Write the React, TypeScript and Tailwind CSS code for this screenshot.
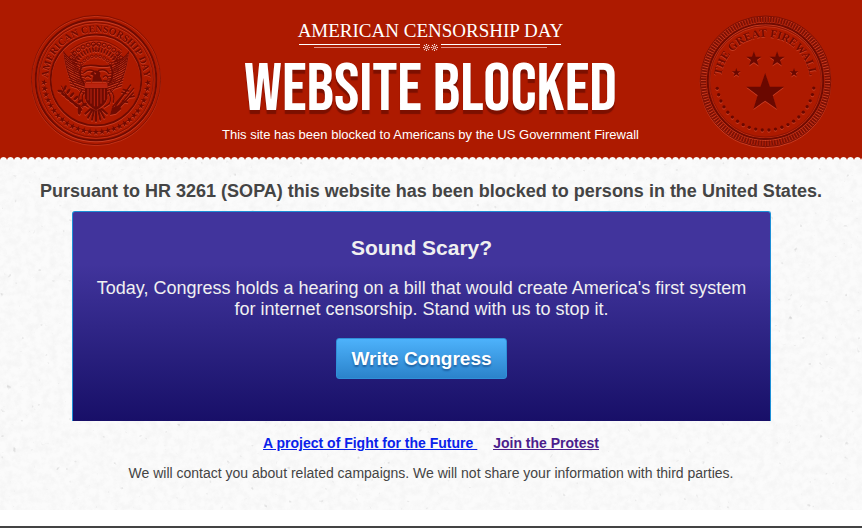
const STAR = "M0-10 2.4-3.1 9.5-3.1 3.8 1.2 5.9 8.1 0 3.9-5.9 8.1-3.8 1.2-9.5-3.1-2.4-3.1Z";

function polar(cx: number, cy: number, r: number, deg: number) {
  const a = (deg * Math.PI) / 180;
  return [cx + r * Math.cos(a), cy + r * Math.sin(a)];
}

function range(n: number) {
  return Array.from({ length: n }, (_, i) => i);
}

function Wing() {
  return (
    <g fill="none" stroke="#6f0b02" strokeLinecap="round">
      {/* long outer feathers */}
      {range(13).map((i) => (
        <path
          key={i}
          d={`M${133 + i * 1.6} ${144 + i * 8.2}q${8 + i} ${14 - i * 0.6} ${34 + i * 1.4} ${26 - i * 0.8}`}
          strokeWidth="3.4"
        />
      ))}
      {/* inner coverts */}
      {range(11).map((i) => (
        <path key={i} d={`M${153 + i * 1.2} ${142 + i * 8.4}q6 10 ${24 + i} 14`} strokeWidth="2.6" />
      ))}
      <path d="M131 140C138 190 146 240 196 268M160 138C164 160 170 176 184 186" strokeWidth="2.6" />
    </g>
  );
}

function EagleSeal() {
  return (
    <svg
      viewBox="30 27 396 396"
      role="img"
      aria-label="American Censorship Day seal"
      className="size-[132px] shrink-0 drop-shadow-[0_1px_0_rgba(255,130,100,0.35)]"
    >
      <defs>
        <path id="eagle-arc" d="M84 225a144 144 0 0 1 288 0" />
      </defs>
      <g fill="none" stroke="#6f0b02">
        <circle cx="228" cy="225" r="194" strokeWidth="2" />
        <circle cx="228" cy="225" r="181" strokeWidth="6" />
        <circle cx="228" cy="225" r="172" strokeWidth="2" />
        <circle cx="228" cy="225" r="136" strokeWidth="5" />
      </g>
      <text fill="#6f0b02" fontSize="30" className="font-['Liberation_Serif',serif] font-bold">
        <textPath href="#eagle-arc" startOffset="50%" textAnchor="middle">
          AMERICAN CENSORSHIP DAY
        </textPath>
      </text>
      {range(27).map((i) => {
        const deg = 3 + i * 6.7;
        const [x, y] = polar(228, 225, 156, deg);
        return <path key={i} d={STAR} fill="#6f0b02" transform={`translate(${x} ${y}) rotate(${deg - 90})`} />;
      })}

      {/* rays and clouds */}
      <g fill="none" stroke="#6f0b02">
        {range(19).map((i) => {
          const [x1, y1] = polar(228, 205, 64, 205 + i * 7.2);
          const [x2, y2] = polar(228, 205, 78, 205 + i * 7.2);
          return <path key={i} d={`M${x1} ${y1}L${x2} ${y2}`} strokeWidth="4" />;
        })}
        {range(12).map((i) => {
          const [x, y] = polar(228, 205, 88, 212 + i * 10.6);
          return <circle key={i} cx={x} cy={y} r="6" strokeWidth="3" />;
        })}
        {range(9).map((i) => {
          const [x, y] = polar(228, 205, 52, 214 + i * 14);
          return <circle key={i} cx={x} cy={y} r="4" strokeWidth="2.4" />;
        })}
        <path d="M150 136Q228 74 306 136" strokeWidth="2" />
        <circle cx="229" cy="128" r="11" strokeWidth="2.5" />
      </g>

      <Wing />
      <g transform="matrix(-1 0 0 1 457 0)">
        <Wing />
      </g>

      {/* ribbon, head and breast */}
      <g fill="none" stroke="#6f0b02" strokeWidth="5" strokeLinecap="round">
        <path d="M184 186Q204 178 228 182T272 181M184 186Q174 212 190 232M272 181Q284 210 270 232" />
        <path d="M192 203Q205 190 222 198M236 196Q258 190 266 206" strokeWidth="4" />
        <path d="M196 216Q204 208 212 218M250 216Q260 206 264 220M198 228H212M250 228H262" strokeWidth="4" />
      </g>
      <path d="M216 230L220 212 210 208Q220 192 236 198 244 204 240 214L248 230Z" fill="#6f0b02" />
      <path d="M222 202l7 3-4 4Z" fill="#c43621" />

      {/* shield */}
      <path d="M195 248H262V280Q258 300 228 316 199 300 195 280Z" fill="#6f0b02" />
      <path d="M195 236H262V248H195Z" fill="#b92410" />
      <path d="M204 251V286M213 251V296M223 251V304M233 251V304M243 251V296M253 251V286" stroke="#b92410" strokeWidth="3" />

      {/* legs and tail */}
      <g fill="none" stroke="#6f0b02" strokeWidth="4" strokeLinecap="round">
        <path d="M192 262Q182 280 190 296M265 262Q276 280 268 296M186 256Q172 274 178 292M272 256Q286 274 280 292" />
        <path d="M212 312L196 326M217 314L204 338M222 316L216 344M228 318V348M235 316L241 344M240 314L253 338M245 312L261 326" strokeWidth="6" />
        <path d="M190 296L204 306M268 296L253 306" />
      </g>

      {/* olive branch */}
      <path d="M124 242Q136 282 190 308" fill="none" stroke="#6f0b02" strokeWidth="3" />
      <g fill="#6f0b02">
        {range(6).map((i) => {
          const x = 127 + i * 10 + i * i * 0.3;
          const y = 254 + i * 10;
          return (
            <g key={i}>
              <ellipse cx={x - 5} cy={y + 5} rx="10" ry="4" transform={`rotate(${15 + i * 8} ${x - 5} ${y + 5})`} />
              <ellipse cx={x + 8} cy={y - 5} rx="9" ry="4" transform={`rotate(${-65 + i * 8} ${x + 8} ${y - 5})`} />
            </g>
          );
        })}
        <ellipse cx="178" cy="318" rx="5" ry="11" />
      </g>

      {/* arrows */}
      <g stroke="#6f0b02" strokeWidth="4" strokeLinecap="round">
        <path d="M332 240L286 304M341 250L290 312M322 254L278 306M340 264L284 322" />
        <path d="M318 266L306 262M326 258L310 254M330 276L342 274M308 288L322 292" strokeWidth="5" />
      </g>
      <path d="M270 330L276 308 298 300 304 312 288 326Z" fill="#6f0b02" />
    </svg>
  );
}

function FirewallSeal() {
  return (
    <svg
      viewBox="27 27 400 404"
      role="img"
      aria-label="The Great Firewall seal"
      className="h-[134px] w-[133px] shrink-0 drop-shadow-[0_1px_0_rgba(255,130,100,0.35)]"
    >
      <defs>
        <path id="firewall-arc" d="M93 230a134 134 0 0 1 268 0" />
      </defs>
      <g fill="none" stroke="#7c1004">
        <circle cx="227" cy="230" r="197" strokeWidth="3" />
        <circle cx="227" cy="230" r="187" strokeWidth="16" strokeDasharray="5 3.2" />
        <circle cx="227" cy="230" r="174" strokeWidth="6" stroke="#6f0b02" />
        <circle cx="227" cy="230" r="168" strokeWidth="2" />
      </g>
      <text fill="#6f0b02" fontSize="34" className="font-['Liberation_Serif',serif] font-bold">
        <textPath href="#firewall-arc" startOffset="50%" textAnchor="middle">
          THE GREAT FIREWALL
        </textPath>
      </text>
      <g fill="#6a0800">
        <path d={STAR} transform="translate(226 265) scale(6)" />
        <path d={STAR} transform="translate(192 163) scale(2.4)" />
        <path d={STAR} transform="translate(262 163) scale(2.4)" />
        <path d={STAR} transform="translate(139 204) scale(1.4)" />
        <path d={STAR} transform="translate(313 204) scale(1.4)" />
        {range(22).map((i) => {
          const [x, y] = polar(227, 230, 147, 8 + i * 7.8);
          return <circle key={i} cx={x} cy={y} r="5" />;
        })}
      </g>
    </svg>
  );
}

function Ornament() {
  return (
    <div className="flex gap-[3px]" aria-hidden="true">
      <div className="flex flex-1 flex-col items-end gap-px">
        <div className="h-px w-full bg-white" />
        <div className="mt-px h-px w-[106px] bg-[#e2958a]" />
      </div>
      <svg viewBox="0 0 15 7" className="h-[7px] w-[15px]" fill="#fff">
        {[3.5, 11.5].map((x) => (
          <g key={x}>
            {range(8).map((i) => {
              const [dx, dy] = polar(x, 3.5, 3, i * 45);
              return <circle key={i} cx={dx} cy={dy} r="0.6" />;
            })}
            <circle cx={x} cy="3.5" r="1.3" fill="none" stroke="#fff" strokeWidth="0.9" />
          </g>
        ))}
      </svg>
      <div className="flex flex-1 flex-col gap-px">
        <div className="h-px w-full bg-white" />
        <div className="mt-px h-px w-[106px] bg-[#e2958a]" />
      </div>
    </div>
  );
}

function PaperTexture() {
  return (
    <svg className="absolute inset-0 size-full" aria-hidden="true">
      <filter id="paper">
        <feTurbulence type="fractalNoise" baseFrequency="0.14" numOctaves="4" seed="8" />
        <feColorMatrix values="0 0 0 0 0.5  0 0 0 0 0.5  0 0 0 0 0.5  0.4 0 0 0 -0.14" />
      </filter>
      <filter id="specks">
        <feTurbulence type="fractalNoise" baseFrequency="0.16" numOctaves="2" seed="21" />
        <feColorMatrix values="0 0 0 0 0.4  0 0 0 0 0.4  0 0 0 0 0.4  4 0 0 0 -3" />
      </filter>
      <rect width="100%" height="100%" filter="url(#paper)" opacity="0.5" />
      <rect width="100%" height="100%" filter="url(#specks)" opacity="0.6" />
    </svg>
  );
}

export default function App() {
  return (
    <div className="flex min-h-screen flex-col border-b-2 border-[#444] bg-white font-['Liberation_Sans',Arial,sans-serif] text-[#444]">
      <header className="bg-[#ad1a00]">
        <div className="flex items-start justify-between px-[30px] pt-[14px]">
          <EagleSeal />
          <div className="flex flex-col items-center pt-1 text-white">
            <div className="flex w-[262px] flex-col">
              <p className="self-center font-['Liberation_Serif',serif] text-[19px] leading-[26px] whitespace-nowrap">
                AMERICAN CENSORSHIP DAY
              </p>
              <Ornament />
            </div>
            <h1 className="mt-[3px] font-['Bebas_Neue','Roboto_Condensed',sans-serif] text-[68px] leading-[71px] font-normal whitespace-nowrap [text-shadow:0_4px_1px_#7c1000]">
              WEBSITE BLOCKED
            </h1>
            <p className="text-[13px] leading-5 whitespace-nowrap">
              This site has been blocked to Americans by the US Government Firewall
            </p>
          </div>
          <FirewallSeal />
        </div>
        <div className="mt-[9px] h-[3px] bg-[radial-gradient(circle_at_50%_120%,#fbfbfb_3px,transparent_4px)] bg-size-[7px_3px]" />
      </header>

      <main className="relative bg-[#fbfbfb] pb-[27px]">
        <PaperTexture />
        <div className="relative text-center">
          <h2 className="pt-[19px] text-[18px] leading-6 font-bold">
            Pursuant to HR 3261 (SOPA) this website has been blocked to persons in the United States.
          </h2>
          <section className="mt-2 mr-[91px] ml-[72px] rounded-t-[3px] border border-b-0 border-[#1d8fd6] bg-linear-to-b from-[#41349c] from-25% to-[#180f68] px-3 pt-6 pb-[42px] text-[#f0f0f0]">
            <h3 className="text-[21px] leading-6 font-bold">Sound Scary?</h3>
            <p className="mt-[18px] text-[18px] leading-[21px]">
              Today, Congress holds a hearing on a bill that would create America's first system
              <br />
              for internet censorship. Stand with us to stop it.
            </p>
            <button
              type="button"
              className="mt-[18px] h-[41px] rounded-[3px] border border-[#2f8fd8] bg-linear-to-b from-[#4db2fb] to-[#2b83cb] px-[14px] text-[19px] leading-6 font-bold text-white [text-shadow:0_2px_2px_#1d5fa0]"
            >
              Write Congress
            </button>
          </section>
          <nav className="mt-3 flex justify-center gap-4 text-[14px] leading-5 font-bold underline">
            <a href="#project" className="text-[#0a22ea]">
              A project of Fight for the Future&nbsp;
            </a>
            <a href="#protest" className="text-[#4b1e8c]">
              Join the Protest
            </a>
          </nav>
          <p className="mt-[10px] text-[14px] leading-5">
            We will contact you about related campaigns. We will not share your information with third parties.
          </p>
        </div>
      </main>
    </div>
  );
}
